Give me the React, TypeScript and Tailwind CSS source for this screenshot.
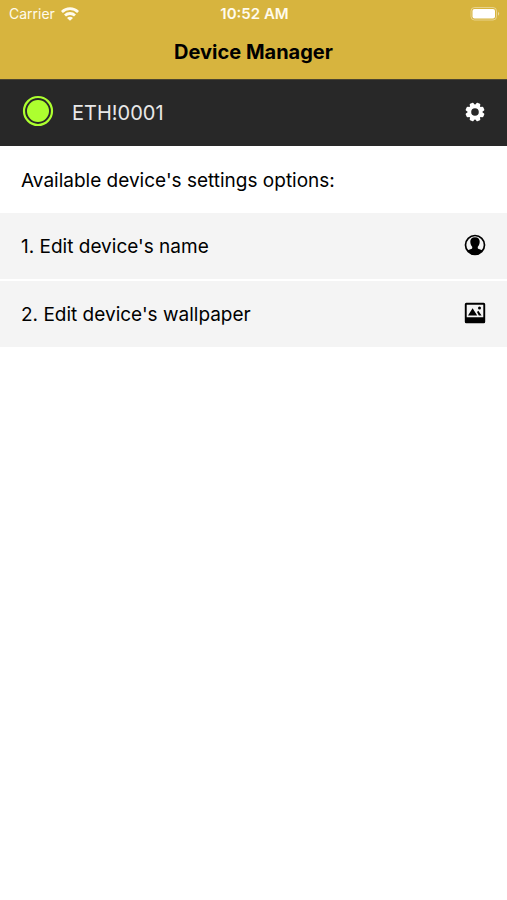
import React from "react";

function WifiIcon() {
  return (
    <svg viewBox="0 0 18 14" className="h-[14px] w-[18px]" fill="none" stroke="currentColor" strokeWidth="2.8" aria-hidden="true">
      <path d="M.9 5C5.500 .6 12.500 .6 17.100 5" />
      <path d="M4 8.500c2.800-2.700 7.200-2.700 10 0" />
      <path d="M9 13.800 6 10.900c1.700-1.500 4.300-1.500 6 0z" fill="currentColor" stroke="none" />
    </svg>
  );
}

function BatteryIcon() {
  return (
    <svg viewBox="0 0 30 14" className="h-[14px] w-[30px]" aria-hidden="true">
      <rect x="1" y="0.500" width="25.500" height="12.500" rx="3.500" fill="none" stroke="#fff" strokeOpacity="0.4" />
      <rect x="2.500" y="2" width="22.500" height="9.500" rx="2" fill="#fff" />
      <path d="M28 4.700q2.400 2 0 4z" fill="#fff" fillOpacity="0.5" />
    </svg>
  );
}

function GearIcon() {
  const teeth = [0, 45, 90, 135, 180, 225, 270, 315];
  return (
    <svg viewBox="0 0 20 20" className="size-5" aria-hidden="true">
      <g fill="#fff">
        {teeth.map((angle) => (
          <path key={angle} d="M7.200 4 8 1Q8.200.5 8.700.5h2.600q.5 0 .7.500L12.800 4z" transform={`rotate(${angle + 22.5} 10 10)`} />
        ))}
      </g>
      <circle cx="10" cy="10" r="5.600" fill="none" stroke="#fff" strokeWidth="3.600" />
    </svg>
  );
}

function PersonIcon() {
  return (
    <svg viewBox="0 0 22 22" className="size-[22px]" aria-hidden="true">
      <circle cx="11" cy="11" r="9.500" fill="none" stroke="#000" strokeWidth="1.700" />
      <path d="M11 3.300c-3.200 0-4.800 1.800-4.700 4.500.1 2.100.7 3.800 1.900 5 .2.900.1 1.500-.3 1.900-.7.500-3.400.7-4.500 1.900C5.200 19.200 8 20.600 11 20.600s5.800-1.400 7.600-4c-1.100-1.200-3.800-1.400-4.500-1.900-.4-.4-.5-1-.3-1.900 1.200-1.200 1.800-2.900 1.900-5 .1-2.700-1.500-4.500-4.700-4.500z" />
    </svg>
  );
}

function PictureIcon() {
  return (
    <svg viewBox="0 0 22 22" className="size-[22px]" aria-hidden="true">
      <path fillRule="evenodd" d="M2.300.8h17.400a1.500 1.500 0 0 1 1.500 1.500v17.400a1.500 1.500 0 0 1-1.500 1.500H2.300A1.500 1.500 0 0 1 .8 19.700V2.300A1.500 1.500 0 0 1 2.300.8zM2.700 2.700v12.600h16.600V2.700z" />
      <path d="m4 13.500 4.600-7.200 4.600 7.200zM13 10l1.300-1.200 3.300 4.700h-2.800z" />
      <circle cx="15.500" cy="6" r="1.500" />
    </svg>
  );
}

function OptionRow({ label, icon }: { label: string; icon: React.ReactNode }) {
  return (
    <li>
      <button type="button" className="flex h-[66px] w-full items-center justify-between bg-[#f4f4f4] px-[21px] pt-[2px] text-left">
        <span>{label}</span>
        <span className="pb-1">{icon}</span>
      </button>
    </li>
  );
}

export default function App() {
  return (
    <div className="min-h-screen bg-white font-['Inter',sans-serif] text-[19px] leading-6 text-black">
      <header className="bg-[#d7b43e]">
        <div className="grid h-7 grid-cols-3 items-center pr-[7px] pl-[9px] text-sm text-[#fffbed]">
          <div className="flex items-center gap-[6px]">
            <span>Carrier</span>
            <WifiIcon />
          </div>
          <span className="text-center text-[15px] font-semibold">10:52 AM</span>
          <div className="flex justify-end">
            <BatteryIcon />
          </div>
        </div>
        <h1 className="h-[51px] pt-3 text-center text-xl leading-6 font-bold">Device Manager</h1>
      </header>
      <main>
        <section className="flex h-[67px] items-center border-t border-[#4b4530] bg-[#282828] px-[22px] text-[#e8e8e8]">
          <svg viewBox="0 0 32 32" className="mb-1 size-8" aria-hidden="true">
            <circle cx="16" cy="16" r="14" fill="none" stroke="#adff2f" strokeWidth="2.200" />
            <circle cx="16" cy="16" r="11" fill="#adff2f" />
          </svg>
          <span className="ml-[18px] flex-1 text-xl leading-6">ETH!0001</span>
          <button type="button" aria-label="Device settings" className="pb-[2px]">
            <GearIcon />
          </button>
        </section>
        <h2 className="flex h-[67px] items-center px-[21px] pt-[2px]">Available device's settings options:</h2>
        <ul className="flex flex-col gap-[2px]">
          <OptionRow label="1. Edit device's name" icon={<PersonIcon />} />
          <OptionRow label="2. Edit device's wallpaper" icon={<PictureIcon />} />
        </ul>
      </main>
    </div>
  );
}
